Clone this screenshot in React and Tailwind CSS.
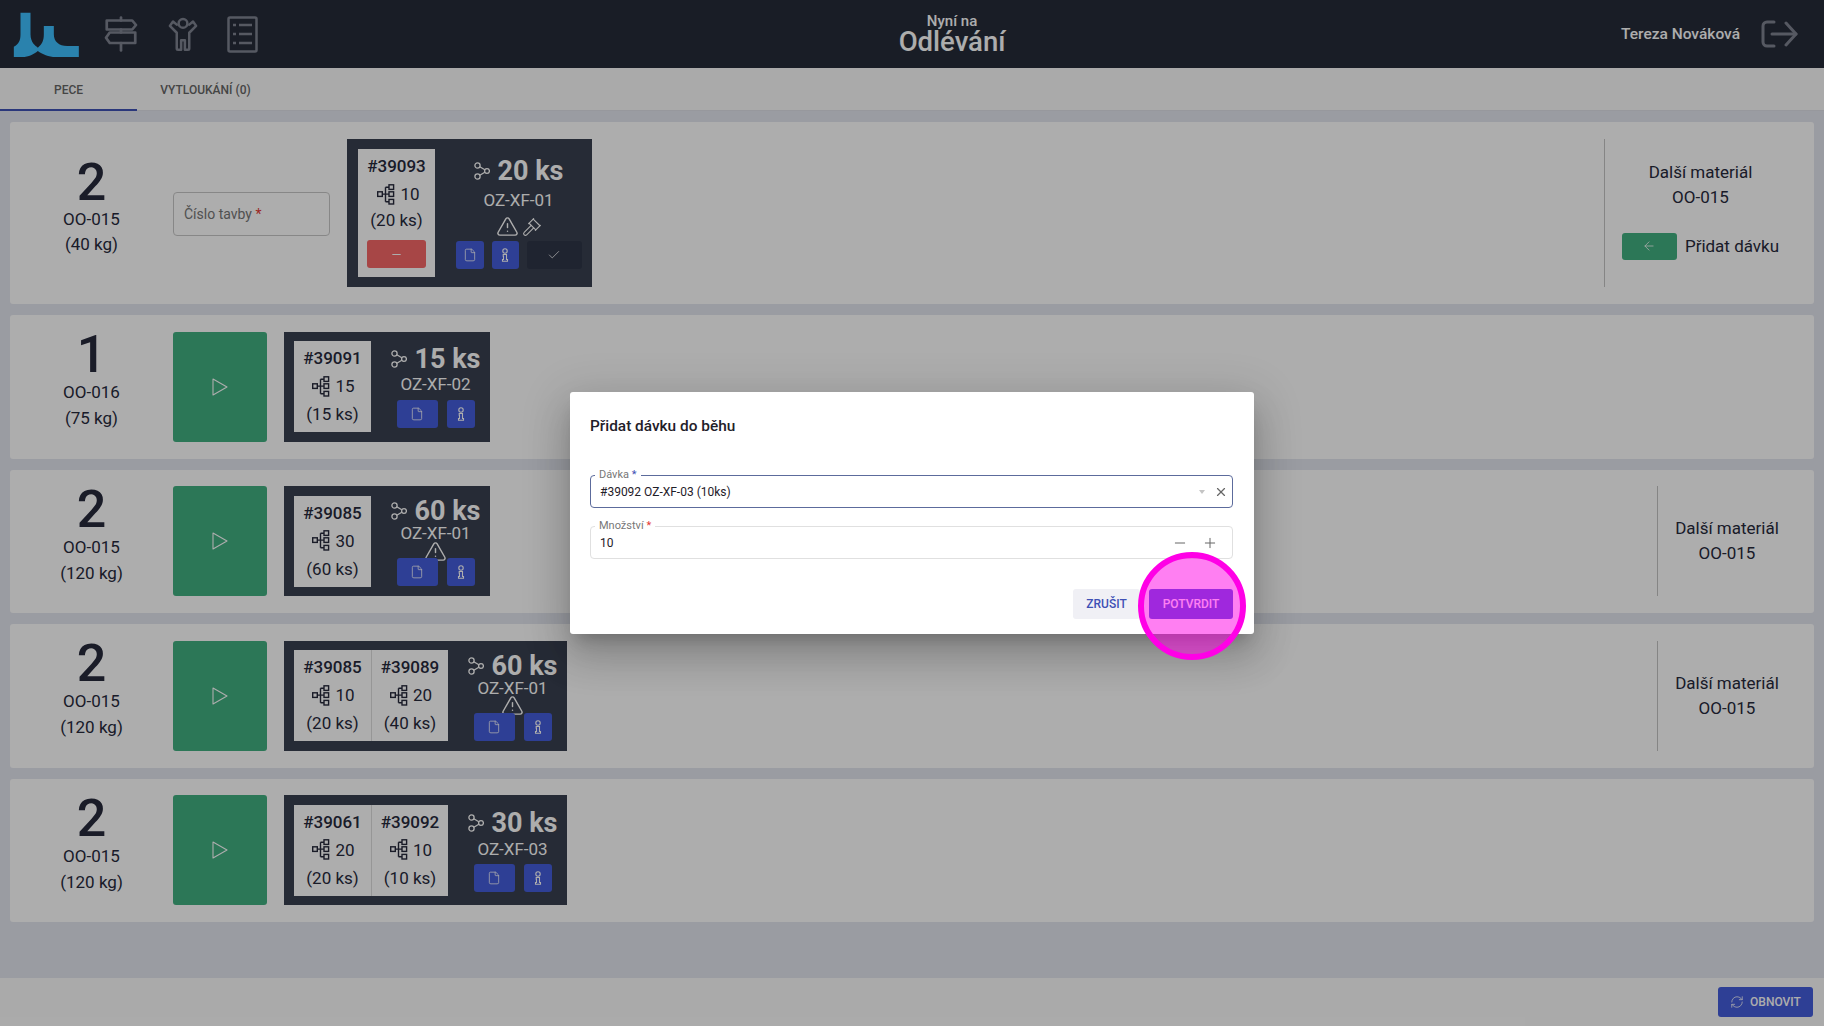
import React from 'react';
import { Check, Minus, Plus, X, ArrowLeft, File, TriangleAlert, Gavel, RefreshCw } from 'lucide-react';

const Logo = () => (
    <svg width="66" height="45" viewBox="38 33 197 135">
        <path fill="#3fc0ff" d="M40 168V137C55 130 60 118 60 100V35H90V100C90 125 105 135 112 140C125 130 130 118 130 100V75H160V100C160 122 175 135 200 135H235V168H165C145 168 125 160 112 150C100 160 85 168 65 168Z" />
    </svg>
);

const Signpost = () => (
    <svg width="36" height="36" viewBox="0 0 24 24" fill="none" stroke="#7f8491" strokeWidth="1.8" strokeLinecap="round" strokeLinejoin="round">
        <path d="M12 23v-5" />
        <path d="M12 11V9" />
        <path d="M12 3V1" />
        <path d="M2.5 3v6h17l2.5-3-2.5-3z" />
        <path d="M21.5 11v7h-17L2 14.500 4.500 11z" />
    </svg>
);

const Person = () => (
    <svg width="30" height="36" viewBox="0 0 24 28" fill="none" stroke="#7f8491" strokeWidth="2" strokeLinecap="round" strokeLinejoin="round">
        <circle cx="12" cy="5.500" r="3.500" />
        <path d="M7 6.500 4 4 1.500 7.500 7 13v12.500a1 1 0 0 0 1 1h2.500V19h3v7.500H16a1 1 0 0 0 1-1V13l5.500-5.500L20 4l-3 2.500" />
    </svg>
);

const ListIcon = () => (
    <svg width="31" height="37" viewBox="0 0 31 37" fill="none" stroke="#7f8491" strokeWidth="2.500" strokeLinejoin="round">
        <rect x="1.500" y="1.500" width="28" height="34" rx="1.500" />
        <path d="M12 9h13M12 18h13M12 27h13" />
        <path d="M6 9h3M6 18h3M6 27h3" />
    </svg>
);

const Logout = () => (
    <svg width="37" height="28" viewBox="0 0 37 28" fill="none" stroke="#7f8491" strokeWidth="3" strokeLinecap="round" strokeLinejoin="round">
        <path d="M13 2H6a4 4 0 0 0-4 4v16a4 4 0 0 0 4 4h7" />
        <path d="M11 14h24" />
        <path d="M25 3l10 11-10 11" />
    </svg>
);

const Tree = () => (
    <svg width="18" height="21" viewBox="0 0 18 21" fill="none" stroke="#272a3c" strokeWidth="1.400">
        <rect x="0.700" y="7.800" width="4.600" height="4.600" />
        <path d="M5.300 10.100H12M8.500 3.200V17.800M8.500 3.200H12M8.500 17.800H12" />
        <rect x="12" y="0.800" width="4.600" height="4.600" />
        <rect x="12" y="7.800" width="4.600" height="4.600" />
        <rect x="12" y="15.400" width="4.600" height="4.600" />
    </svg>
);

const Branch = () => (
    <svg width="16" height="18" viewBox="0 0 16 18" fill="none" stroke="white" strokeWidth="1.300">
        <circle cx="3.500" cy="3.500" r="2.600" />
        <circle cx="3.500" cy="14.500" r="2.600" />
        <circle cx="13" cy="9" r="2.400" />
        <path d="M5.800 4.800 10.800 7.800M5.800 13.200 10.800 10.200" />
    </svg>
);

const InfoGlyph = () => (
    <svg width="8" height="14" viewBox="0 0 8 14" fill="none" stroke="white" strokeWidth="1.100">
        <circle cx="4" cy="3" r="2.200" />
        <path d="M2.200 6.500h3.300v5h1v1.800H1.500v-1.800h1v-3.300h-.3z" />
    </svg>
);

const PlayGlyph = () => (
    <svg width="16" height="18" viewBox="0 0 16 18" fill="none" stroke="white" strokeWidth="1.100" strokeLinejoin="round">
        <path d="M1 1 15 9 1 17Z" />
    </svg>
);

const BlueBtn = ({ className, children }) => (
    <button className={`flex items-center justify-center bg-[#455ddc] rounded-[3px] text-white ${className}`}>{children}</button>
);

const Lot = ({ id, count, pieces, divided }) => (
    <div className={`w-[77px] flex flex-col items-center bg-white text-[#272a3c] text-[17px] ${divided ? 'border-l border-[#dddddd]' : ''}`}>
        <div className="font-medium h-[30px] leading-[34px]">{id}</div>
        <div className="flex items-center gap-[5px] h-[30px] leading-[30px] pl-[2px]"><Tree />{count}</div>
        <div className="h-[30px] leading-[27px]">({pieces} ks)</div>
    </div>
);

const Summary = ({ total, code, className, codeClass, warning, buttons }) => (
    <div className={`flex flex-col items-center pl-[10px] text-white ${className}`}>
        <div className="flex items-center gap-2 h-8">
            <Branch />
            <span className="text-[27px] font-bold leading-8 whitespace-nowrap">{total} ks</span>
        </div>
        <div className={`h-5 leading-5 text-[17px] ${codeClass}`}>{code}</div>
        {warning}
        {buttons}
    </div>
);

const NextMaterial = ({ className }) => (
    <div className={`flex flex-col items-center justify-center border-l border-[#c4c4c4] text-[17px] leading-[25px] text-[#272a3c] ${className}`}>
        <span>Další materiál</span>
        <span>OO-015</span>
    </div>
);

const runs = [
    { no: '1', mat: 'OO-016', kg: '75 kg', total: '15', code: 'OZ-XF-02', lots: [['#39091', '15', '15']], pt: 'pt-[11px]', cm: '-mt-[1px]', bm: 'mt-[6px]', w: 'w-[119px]' },
    { no: '2', mat: 'OO-015', kg: '120 kg', total: '60', code: 'OZ-XF-01', lots: [['#39085', '30', '60']], pt: 'pt-[9px]', cm: '-mt-[4px]', bm: '-mt-[1px]', warn: 'mt-0', w: 'w-[119px]', next: true },
    { no: '2', mat: 'OO-015', kg: '120 kg', total: '60', code: 'OZ-XF-01', lots: [['#39085', '10', '20'], ['#39089', '20', '40']], pt: 'pt-[9px]', cm: '-mt-[4px]', bm: '', warn: '-mt-[1px]', w: 'w-[119px]', next: true },
    { no: '2', mat: 'OO-015', kg: '120 kg', total: '30', code: 'OZ-XF-03', lots: [['#39061', '20', '20'], ['#39092', '10', '10']], pt: 'pt-3', cm: '', bm: 'mt-[5px]', w: 'w-[119px]' },
];

const App = () => {
    return (
        <div className="relative h-screen flex flex-col bg-[#e4e6ef] overflow-hidden [font-family:Roboto,sans-serif]">
            {/* Top bar */}
            <header className="h-[68px] shrink-0 bg-[#262b39] flex items-center pl-[13px] pr-[26px]">
                <Logo />
                <div className="flex items-center ml-6 gap-[29px]">
                    <Signpost />
                    <Person />
                    <ListIcon />
                </div>
                <div className="flex-1 flex flex-col items-center text-white ml-[25px]">
                    <span className="text-[15px] font-medium leading-4">Nyní na</span>
                    <span className="text-[27.500px] font-medium leading-[26px]">Odlévání</span>
                </div>
                <span className="text-[15.500px] font-medium text-white mr-[21px] mt-[1px]">Tereza Nováková</span>
                <Logout />
            </header>

            {/* Tabs */}
            <nav className="h-[43px] shrink-0 bg-[#fbfbfb] border-b border-[#dfe1e8] flex text-xs font-medium text-[#666666]">
                <div className="w-[137px] h-[43px] flex items-center justify-center pt-[2px] border-b-2 border-[#3f51b5]">PECE</div>
                <div className="w-[137px] h-[42px] flex items-center justify-center pt-[2px]">VYTLOUKÁNÍ (0)</div>
            </nav>

            {/* Furnace list */}
            <main className="flex-1 flex flex-col gap-[11px] pt-[11px] px-[10px]">
                <section className="h-[182px] bg-white rounded-[3px] flex items-center pr-[18px]">
                    <div className="w-[163px] flex flex-col items-center pb-3 text-[#272a3c] text-[17px] leading-[26px]">
                        <span className="text-[52px] font-medium leading-[50px]">2</span>
                        <span className="-mt-[2px]">OO-015</span>
                        <span className="-mt-[1px]">(40 kg)</span>
                    </div>
                    <div className="w-[157px] h-11 mt-[2px] mr-[17px] flex items-center pl-[10px] border border-[#c8c8c8] rounded text-sm text-[#777777]">
                        Číslo tavby&nbsp;<span className="text-[#e53935]">*</span>
                    </div>
                    <div className="h-[148px] bg-[#394050] flex pl-[11px] pt-[10px] pb-[10px]">
                        <div className="w-[77px] flex flex-col items-center bg-white text-[#272a3c] text-[17px] leading-[28px]">
                            <div className="font-medium mt-[3px]">#39093</div>
                            <div className="flex items-center gap-[5px] pl-1"><Tree />10</div>
                            <div className="-mt-[2px]">(20 ks)</div>
                            <button className="w-[59px] h-7 mt-[6px] bg-[#f76767] rounded-[3px] flex items-center justify-center text-white"><Minus size={13} /></button>
                        </div>
                        <Summary
                            total="20"
                            code="OZ-XF-01"
                            className="w-[157px] pt-[6px]"
                            codeClass="mt-[3px]"
                            warning={
                                <div className="flex items-center gap-[3px] mt-2 h-[17px]">
                                    <TriangleAlert size={23} strokeWidth={1.500} />
                                    <Gavel size={20} strokeWidth={1.300} />
                                </div>
                            }
                            buttons={
                                <div className="flex gap-2 mt-[6px]">
                                    <BlueBtn className="w-7 h-7"><File size={14} strokeWidth={1.300} /></BlueBtn>
                                    <BlueBtn className="w-[27px] h-7"><InfoGlyph /></BlueBtn>
                                    <button className="w-[55px] h-7 bg-[#2f3547] rounded-[3px] flex items-center justify-center text-white"><Check size={14} strokeWidth={1.300} /></button>
                                </div>
                            }
                        />
                    </div>
                    <div className="ml-auto w-[192px] h-[148px] flex flex-col items-center justify-center pb-[7px] border-l border-[#c4c4c4] text-[17px] leading-[25px] text-[#272a3c]">
                        <span>Další materiál</span>
                        <span>OO-015</span>
                        <div className="flex items-center gap-2 mt-[23px]">
                            <button className="w-[55px] h-[27px] bg-[#42b081] rounded-[3px] flex items-center justify-center text-white"><ArrowLeft size={14} strokeWidth={1.300} /></button>
                            <span>Přidat dávku</span>
                        </div>
                    </div>
                </section>

                {runs.map((run, idx) => (
                    <section key={idx} className="h-[143.500px] bg-white rounded-[3px] flex items-center pr-[18px]">
                        <div className="w-[163px] flex flex-col items-center pb-3 text-[#272a3c] text-[17px] leading-[26px]">
                            <span className="text-[52px] font-medium leading-[50px]">{run.no}</span>
                            <span className="-mt-[1px]">{run.mat}</span>
                            <span>({run.kg})</span>
                        </div>
                        <button className="w-[94px] h-[110px] mr-[17px] bg-[#42b081] rounded-[3px] flex items-center justify-center"><PlayGlyph /></button>
                        <div className="h-[110px] bg-[#394050] flex pl-[10px] py-[9.500px]">
                            {run.lots.map((lot, i) => (
                                <Lot key={lot[0]} id={lot[0]} count={lot[1]} pieces={lot[2]} divided={i > 0} />
                            ))}
                            <div className="-my-[9.500px]">
                                <Summary
                                    total={run.total}
                                    code={run.code}
                                    className={`${run.w} ${run.pt}`}
                                    codeClass={run.cm}
                                    warning={run.warn ? (
                                        <div className={`h-[17px] -mb-[1px] flex items-center ${run.warn}`}>
                                            <TriangleAlert size={23} strokeWidth={1.500} />
                                        </div>
                                    ) : null}
                                    buttons={
                                        <div className={`relative flex gap-[9px] ${run.bm}`}>
                                            <BlueBtn className="w-[41px] h-7"><File size={14} strokeWidth={1.300} /></BlueBtn>
                                            <BlueBtn className="w-7 h-7"><InfoGlyph /></BlueBtn>
                                        </div>
                                    }
                                />
                            </div>
                        </div>
                        {run.next && <NextMaterial className="ml-auto w-[139px] h-[110px]" />}
                    </section>
                ))}
            </main>

            {/* Bottom bar */}
            <footer className="h-[48px] shrink-0 bg-[#fbfbfb] flex items-center justify-end pr-[11px]">
                <button className="w-[95px] h-[30px] bg-[#455ddc] rounded-[3px] flex items-center justify-center gap-[6px] text-white text-xs font-medium">
                    <RefreshCw size={14} strokeWidth={1.300} />
                    OBNOVIT
                </button>
            </footer>

            {/* Backdrop and dialog */}
            <div className="absolute inset-0 bg-black/[0.32] flex items-center justify-center">
                <div className="relative w-[684px] h-[242px] bg-white rounded-[3px] pl-5 pr-[21px] pt-6 shadow-[0_11px_15px_-7px_rgba(0,0,0,0.2),0_24px_38px_3px_rgba(0,0,0,0.14),0_9px_46px_8px_rgba(0,0,0,0.12)]">
                    <h2 className="text-[15.400px] font-medium leading-5 text-[#1f2029]">Přidat dávku do běhu</h2>

                    <div className="relative mt-[39px] h-[33px] border border-[#5c6b9c] rounded flex items-center pl-[9px] pr-1 text-xs text-[#1f2029]">
                        <span className="absolute -top-[8px] left-[4px] px-1 bg-white text-[11px] leading-[13px] text-[#777777]">Dávka <span className="text-[#3f51b5]">*</span></span>
                        <span className="flex-1">#39092 OZ-XF-03 (10ks)</span>
                        <span className="w-0 h-0 border-x-[3px] border-x-transparent border-t-[4px] border-t-[#c4c4c4] mr-[9px]"></span>
                        <X size={14} strokeWidth={2} className="text-[#666666]" />
                    </div>

                    <div className="relative mt-[18px] h-[33px] border border-[#e0e0e0] rounded flex items-center pl-[9px] pr-[14px] text-xs text-[#1f2029]">
                        <span className="absolute -top-[8px] left-[4px] px-1 bg-white text-[11px] leading-[13px] text-[#777777]">Množství <span className="text-[#e53935]">*</span></span>
                        <span className="flex-1">10</span>
                        <Minus size={16} strokeWidth={1.500} className="text-[#666666] mr-[14px]" />
                        <Plus size={16} strokeWidth={1.500} className="text-[#666666]" />
                    </div>

                    <div className="flex justify-end gap-[9px] mt-[30px]">
                        <button className="w-[67px] h-[30px] bg-[#f0f0f5] rounded-[3px] text-xs font-medium text-[#3f51b5]">ZRUŠIT</button>
                        <button className="w-[84px] h-[30px] bg-[#3f51d5] rounded-[3px] text-xs font-medium text-white">POTVRDIT</button>
                    </div>

                    {/* Click highlight */}
                    <div className="absolute left-[568px] top-[160px] w-[108px] h-[108px] rounded-full border-[6px] border-[#ff00e6] bg-[#ff00e6]/50"></div>
                </div>
            </div>
        </div>
    );
};

export default App;
